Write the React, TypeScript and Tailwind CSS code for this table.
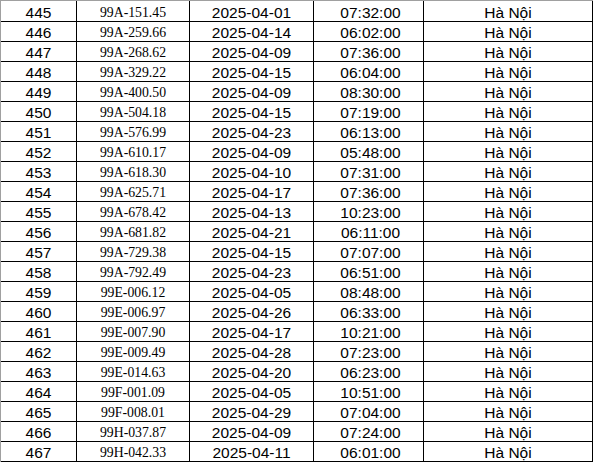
import React from "react";

const rows: [string, string, string, string][] = [
  ["445", "99A-151.45", "2025-04-01", "07:32:00"],
  ["446", "99A-259.66", "2025-04-14", "06:02:00"],
  ["447", "99A-268.62", "2025-04-09", "07:36:00"],
  ["448", "99A-329.22", "2025-04-15", "06:04:00"],
  ["449", "99A-400.50", "2025-04-09", "08:30:00"],
  ["450", "99A-504.18", "2025-04-15", "07:19:00"],
  ["451", "99A-576.99", "2025-04-23", "06:13:00"],
  ["452", "99A-610.17", "2025-04-09", "05:48:00"],
  ["453", "99A-618.30", "2025-04-10", "07:31:00"],
  ["454", "99A-625.71", "2025-04-17", "07:36:00"],
  ["455", "99A-678.42", "2025-04-13", "10:23:00"],
  ["456", "99A-681.82", "2025-04-21", "06:11:00"],
  ["457", "99A-729.38", "2025-04-15", "07:07:00"],
  ["458", "99A-792.49", "2025-04-23", "06:51:00"],
  ["459", "99E-006.12", "2025-04-05", "08:48:00"],
  ["460", "99E-006.97", "2025-04-26", "06:33:00"],
  ["461", "99E-007.90", "2025-04-17", "10:21:00"],
  ["462", "99E-009.49", "2025-04-28", "07:23:00"],
  ["463", "99E-014.63", "2025-04-20", "06:23:00"],
  ["464", "99F-001.09", "2025-04-05", "10:51:00"],
  ["465", "99F-008.01", "2025-04-29", "07:04:00"],
  ["466", "99H-037.87", "2025-04-09", "07:24:00"],
  ["467", "99H-042.33", "2025-04-11", "06:01:00"],
];

const cell = "flex items-center justify-center border-r border-b border-black pt-[3px] leading-none";
const sans = "font-['Liberation_Sans',Arial,sans-serif] text-[15.5px]";
const serif = "font-['Liberation_Serif','Times_New_Roman',serif] text-[13.75px]";

export default function App() {
  return (
    <div className="w-[594px] h-[463px] bg-white text-black overflow-hidden">
      <div className="w-[593px] border-t border-l border-t-[#a0a0a0] border-l-[#a0a0a0] flex flex-col">
        {rows.map((r, i) => (
          <div
            key={r[0]}
            className={`grid grid-cols-[76px_113px_124px_110px_169px] ${i === 0 ? "h-[21px]" : "h-[20px]"}`}
          >
            <div className={`${cell} ${sans}`}>{r[0]}</div>
            <div className={`${cell} ${serif}`}>{r[1]}</div>
            <div className={`${cell} ${sans}`}>{r[2]}</div>
            <div className={`${cell} ${sans} pl-[4px]`}>{r[3]}</div>
            <div className={`${cell} ${sans}`}>Hà Nội</div>
          </div>
        ))}
      </div>
    </div>
  );
}
